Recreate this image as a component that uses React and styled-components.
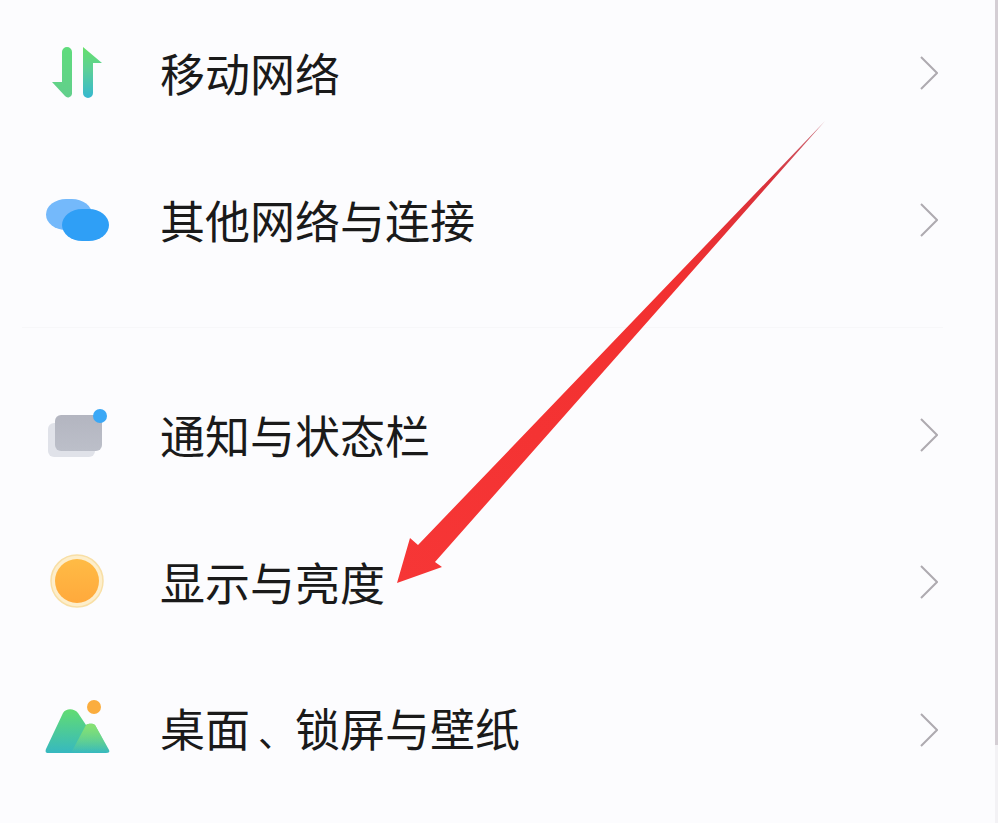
import React from 'react';
import styled, { createGlobalStyle } from 'styled-components';

const GlobalStyle = createGlobalStyle`
  html, body {
    margin: 0;
    padding: 0;
    background: #fcfcfe;
  }
`;

const Comma = styled.span`
  display: inline-block;
  box-sizing: border-box;
  width: 45px;
  padding-left: 8px;
  font-size: 37px;
`;

const NetworkIcon = () => (
  <IconSvg viewBox="0 0 66 66">
    <defs>
      <linearGradient id="netLeft" x1="0" y1="0" x2="0" y2="1">
        <stop offset="0" stopColor="#5fdc7c" />
        <stop offset="1" stopColor="#62cf8c" />
      </linearGradient>
      <linearGradient id="netRight" x1="0" y1="0" x2="0" y2="1">
        <stop offset="0" stopColor="#66e06a" />
        <stop offset="0.45" stopColor="#5ccf98" />
        <stop offset="1" stopColor="#36b8d0" />
      </linearGradient>
    </defs>
    <path d="M18 10a5 5 0 0 1 10 0v42a4 4 0 0 1-7 2L8 40h10z" fill="url(#netLeft)" />
    <path d="M39 5l19 16H49v30a5 5 0 0 1-10 0z" fill="url(#netRight)" />
  </IconSvg>
);

const ConnectIcon = () => (
  <IconSvg viewBox="0 0 66 66">
    <rect x="2" y="10" width="46" height="31" rx="20" ry="15.5" fill="#74b9fb" />
    <rect x="18" y="20" width="47" height="32" rx="20" ry="16" fill="#2f9ff6" />
  </IconSvg>
);

const NotifyIcon = () => (
  <IconSvg viewBox="0 0 66 66">
    <defs>
      <linearGradient id="notifyCard" x1="0" y1="0" x2="0" y2="1">
        <stop offset="0" stopColor="#b3b5c0" />
        <stop offset="1" stopColor="#bcbfc9" />
      </linearGradient>
    </defs>
    <rect x="4" y="19" width="47" height="34" rx="6" fill="#e0e2e9" />
    <rect x="11" y="11" width="47" height="36" rx="6" fill="url(#notifyCard)" />
    <circle cx="56" cy="12" r="7" fill="#3ba8f6" />
  </IconSvg>
);

const BrightnessIcon = () => (
  <IconSvg viewBox="0 0 66 66">
    <defs>
      <linearGradient id="sunCore" x1="0" y1="0" x2="0" y2="1">
        <stop offset="0" stopColor="#ffbb45" />
        <stop offset="1" stopColor="#ffa93c" />
      </linearGradient>
    </defs>
    <circle cx="33" cy="30" r="26" fill="#fdeecb" stroke="#f8dfa6" strokeWidth="1.5" />
    <circle cx="33" cy="30" r="22" fill="url(#sunCore)" />
  </IconSvg>
);

const WallpaperIcon = () => (
  <IconSvg viewBox="0 0 66 66">
    <defs>
      <linearGradient id="peakBack" x1="0" y1="0" x2="0" y2="1">
        <stop offset="0" stopColor="#62dc72" />
        <stop offset="1" stopColor="#36b8c0" />
      </linearGradient>
      <linearGradient id="peakFront" x1="0" y1="0" x2="0" y2="1">
        <stop offset="0" stopColor="#8ae272" />
        <stop offset="1" stopColor="#8ae272" stopOpacity="0" />
      </linearGradient>
    </defs>
    <path d="M19 14c3-5 11-5 15 0l8 12c2-1.500 7-2 9 0l14 25c1 2 0 3-3 3H4c-2 0-3-1-2-4z" fill="url(#peakBack)" />
    <path d="M42 26c2-1.500 7-2 9 0l14 25c1 2 0 3-3 3H27z" fill="url(#peakFront)" />
    <circle cx="50" cy="8" r="7" fill="#fbad3e" />
  </IconSvg>
);

const Chevron = () => (
  <ChevronSvg viewBox="0 0 18 34">
    <path d="M1 1l16 16L1 33" />
  </ChevronSvg>
);

const firstGroup = [
  { id: 'mobile', label: '移动网络', Icon: NetworkIcon },
  { id: 'connect', label: '其他网络与连接', Icon: ConnectIcon },
];

const secondGroup = [
  { id: 'notify', label: '通知与状态栏', Icon: NotifyIcon },
  { id: 'display', label: '显示与亮度', Icon: BrightnessIcon },
  { id: 'wallpaper', label: <>桌面<Comma>、</Comma>锁屏与壁纸</>, Icon: WallpaperIcon },
];

const SettingRow = ({ label, Icon }) => (
  <Row>
    <IconSlot>
      <Icon />
    </IconSlot>
    <Label>{label}</Label>
    <Chevron />
  </Row>
);

const App = () => {
  return (
    <Page>
      <GlobalStyle />
      <Group>
        {firstGroup.map((item) => <SettingRow key={item.id} label={item.label} Icon={item.Icon} />)}
      </Group>
      <Divider />
      <Group>
        {secondGroup.map((item) => <SettingRow key={item.id} label={item.label} Icon={item.Icon} />)}
      </Group>
      <ArrowOverlay viewBox="0 0 998 823">
        <defs>
          <linearGradient id="arrowFill" gradientUnits="userSpaceOnUse" x1="825" y1="121" x2="397" y2="583">
            <stop offset="0" stopColor="#c9707c" />
            <stop offset="0.12" stopColor="#d8323c" />
            <stop offset="0.35" stopColor="#f23030" />
            <stop offset="1" stopColor="#f63636" />
          </linearGradient>
        </defs>
        <path d="M825 121L435 562L442 567L397 583L410 538L418 545Z" fill="url(#arrowFill)" />
      </ArrowOverlay>
    </Page>
  );
};

export default App;

const Page = styled.div`
  position: relative;
  box-sizing: border-box;
  width: 998px;
  height: 823px;
  padding-top: 1px;
  overflow: hidden;
  background:
    linear-gradient(#d4ced4, #d4ced4) right top / 3px 745px no-repeat,
    linear-gradient(#f3f2f5, #f3f2f5) right top / 3px 100% no-repeat,
    #fcfcfe;
  font-family: "Noto Sans CJK SC", "Noto Sans", sans-serif;
`;

const Group = styled.div`
  display: flex;
  flex-direction: column;
`;

const Row = styled.div`
  display: flex;
  align-items: center;
  height: 147.5px;
  padding: 0 60px 0 44px;
`;

const IconSlot = styled.div`
  flex: none;
  width: 66px;
  height: 66px;
  margin-right: 50px;
`;

const IconSvg = styled.svg`
  display: block;
  width: 66px;
  height: 66px;
  overflow: visible;
  filter: blur(0.6px);
`;

const Label = styled.div`
  flex: 1;
  padding-bottom: 4px;
  font-size: 45px;
  line-height: 60px;
  color: #1a1a1a;
`;

const ChevronSvg = styled.svg`
  flex: none;
  width: 18px;
  height: 34px;
  margin-bottom: 4px;
  fill: none;
  stroke: #aeaab0;
  stroke-width: 2;
`;

const Divider = styled.div`
  height: 1px;
  margin: 31px 55px 35px 22px;
  background: #f7f7f9;
`;

const ArrowOverlay = styled.svg`
  position: absolute;
  top: 0;
  left: 0;
  width: 998px;
  height: 823px;
  pointer-events: none;
`;
